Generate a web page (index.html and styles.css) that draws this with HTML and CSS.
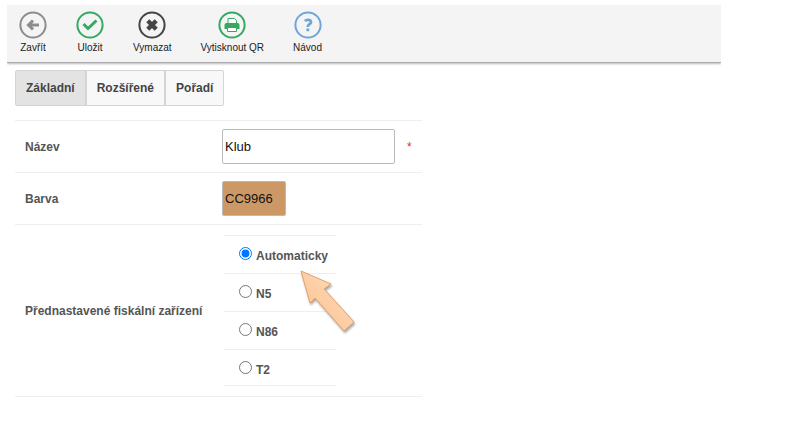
FILE: index.html
```html
<!DOCTYPE html>
<html lang="cs">
<head>
  <meta charset="UTF-8">
  <meta name="viewport" content="width=device-width, initial-scale=1.0">
  <title>Klub</title>

  <link rel="stylesheet" href="styles.css">
</head>
<body>
  <div class="toolbar">
    <button type="button" class="tool">
      <svg class="icon gray" viewBox="0 0 28 28">
        <circle cx="14" cy="14" r="12.6"/>
        <path class="thick" d="M20 14H10M14 9.5L9.5 14L14 18.5"/>
      </svg>
      <span>Zavřít</span>
    </button>
    <button type="button" class="tool">
      <svg class="icon green" viewBox="0 0 28 28">
        <circle cx="14" cy="14" r="12.6"/>
        <path class="thick" d="M7.500 13L12 17.500L20.500 9.500"/>
      </svg>
      <span>Uložit</span>
    </button>
    <button type="button" class="tool">
      <svg class="icon dark" viewBox="0 0 28 28">
        <circle cx="14" cy="14" r="12.6"/>
        <path class="cross" d="M9.800 9.800L18.200 18.200M18.200 9.800L9.800 18.200"/>
      </svg>
      <span>Vymazat</span>
    </button>
    <button type="button" class="tool">
      <svg class="icon green" viewBox="0 0 28 28">
        <circle cx="14" cy="14" r="12.6"/>
        <path class="line" d="M10 12V7.5H16.5L18.5 9.5V12"/>
        <path class="solid" d="M8.500 12H19.500Q21.500 12 21.500 14V18H6.500V14Q6.500 12 8.500 12Z"/>
        <path class="line" d="M9.500 16.500H18.500V20.500H9.500Z"/>
      </svg>
      <span>Vytisknout QR</span>
    </button>
    <button type="button" class="tool">
      <svg class="icon blue" viewBox="0 0 28 28">
        <circle cx="14" cy="14" r="12.6"/>
        <path class="question" d="M10.800 10Q12.200 8.800 14 8.800C16 8.800 17 9.800 17 11.200C17 13.300 13.800 13.200 13.800 16M13.800 17.600V20.200"/>
      </svg>
      <span>Návod</span>
    </button>
  </div>

  <div class="content">
    <div class="tabs">
      <button type="button" class="tab active">Základní</button>
      <button type="button" class="tab">Rozšířené</button>
      <button type="button" class="tab">Pořadí</button>
    </div>

    <form class="form">
      <div class="row">
        <label class="name" for="nazev">Název</label>
        <input type="text" class="text" id="nazev" value="Klub">
        <span class="required">*</span>
      </div>
      <div class="row">
        <label class="name" for="barva">Barva</label>
        <input type="text" class="text color" id="barva" value="CC9966">
      </div>
      <div class="row devices-row" role="radiogroup" aria-labelledby="device-name">
        <span class="name" id="device-name">Přednastavené fiskální zařízení</span>
        <div class="devices">
          <label class="device"><input type="radio" name="device" checked> <span>Automaticky</span></label>
          <label class="device"><input type="radio" name="device"> <span>N5</span></label>
          <label class="device"><input type="radio" name="device"> <span>N86</span></label>
          <label class="device"><input type="radio" name="device"> <span>T2</span></label>
          <svg class="arrow" viewBox="0 0 60 68">
            <defs>
              <linearGradient id="arrow-fill" x1="0" y1="1" x2="1" y2="0">
                <stop offset="0" stop-color="#fbbd88"/>
                <stop offset="1" stop-color="#ffe0c4"/>
              </linearGradient>
            </defs>
            <path d="M2 2L32 15L25 20L55 53L45 62L16 29L11 34Z"/>
          </svg>
        </div>
      </div>
    </form>
  </div>
</body>
</html>
```

FILE: styles.css
```css
body {
  margin: 5px 74px 0 7px;
  background: #fff;
  font-family: "Liberation Sans", Arial, sans-serif;
  font-size: 12px;
  color: #555;
}

button {
  font-family: inherit;
  cursor: pointer;
}

.toolbar {
  display: flex;
  gap: 29px;
  padding: 6px 12px 8px;
  background: #f4f4f4;
  border-bottom: 1px solid #aaa;
  box-shadow: 0 1px 2px #bbb;
}

.tool {
  display: flex;
  flex-direction: column;
  align-items: center;
  gap: 2px;
  padding: 0;
  border: 0;
  background: none;
  font-size: 10px;
  line-height: 13px;
  color: #222;
}

.icon {
  width: 28px;
  height: 28px;
  fill: none;
  stroke: currentColor;
  stroke-width: 2;
}

.icon .thick {
  stroke-width: 3;
}

.icon .cross {
  stroke-width: 4.4;
}

.icon .question {
  stroke-width: 2.8;
}

.icon .line {
  fill: #fff;
  stroke-width: 1;
}

.icon .solid {
  fill: currentColor;
  stroke: none;
}

.gray {
  color: #8c8c8c;
}

.green {
  color: #35a862;
}

.dark {
  color: #444;
}

.blue {
  color: #6fa6d9;
}

.content {
  padding: 7px 8px;
}

.tabs {
  display: flex;
  margin-bottom: 14px;
}

.tab {
  padding: 10px;
  border: 1px solid #d4d4d4;
  background: #f8f8f8;
  font-size: 12px;
  font-weight: bold;
  line-height: 14px;
  color: #444;
}

.tab:first-child {
  border-radius: 2px 0 0 2px;
}

.tab:last-child {
  border-radius: 0 2px 2px 0;
}

.tab.active {
  background: #e3e3e3;
}

.form {
  max-width: 407px;
  border-bottom: 1px solid #eee;
}

.row {
  display: flex;
  align-items: center;
  padding: 8px 10px;
  border-top: 1px solid #eee;
}

.name {
  width: 197px;
  font-weight: bold;
}

.text {
  box-sizing: border-box;
  width: 173px;
  height: 35px;
  padding: 0 2px;
  border: 1px solid #bbb;
  border-radius: 2px;
  background: #fff;
  font-family: inherit;
  font-size: 13px;
  color: #111;
}

.color {
  width: 64px;
  background: #cc9966;
}

.required {
  margin-left: 12px;
  color: #e03030;
}

.devices-row {
  padding: 10px;
}

.devices {
  position: relative;
  width: 112px;
  margin-left: 2px;
  border-bottom: 1px solid #eee;
}

.device {
  display: flex;
  align-items: center;
  gap: 4px;
  padding: 11px 15px 9px;
  border-top: 1px solid #eee;
  font-weight: bold;
  line-height: 16px;
}

.device:nth-child(4) {
  padding-bottom: 7px;
}

.device input {
  width: 13px;
  height: 13px;
  margin: 0 0 4px;
}

/* pointer to the selected device */
.arrow {
  position: absolute;
  top: 34px;
  left: 75px;
  width: 60px;
  height: 68px;
  filter: drop-shadow(1px 2px 1px #aaa);
}

.arrow path {
  fill: url(#arrow-fill);
  stroke: #e3a26c;
  stroke-linejoin: round;
}
```
